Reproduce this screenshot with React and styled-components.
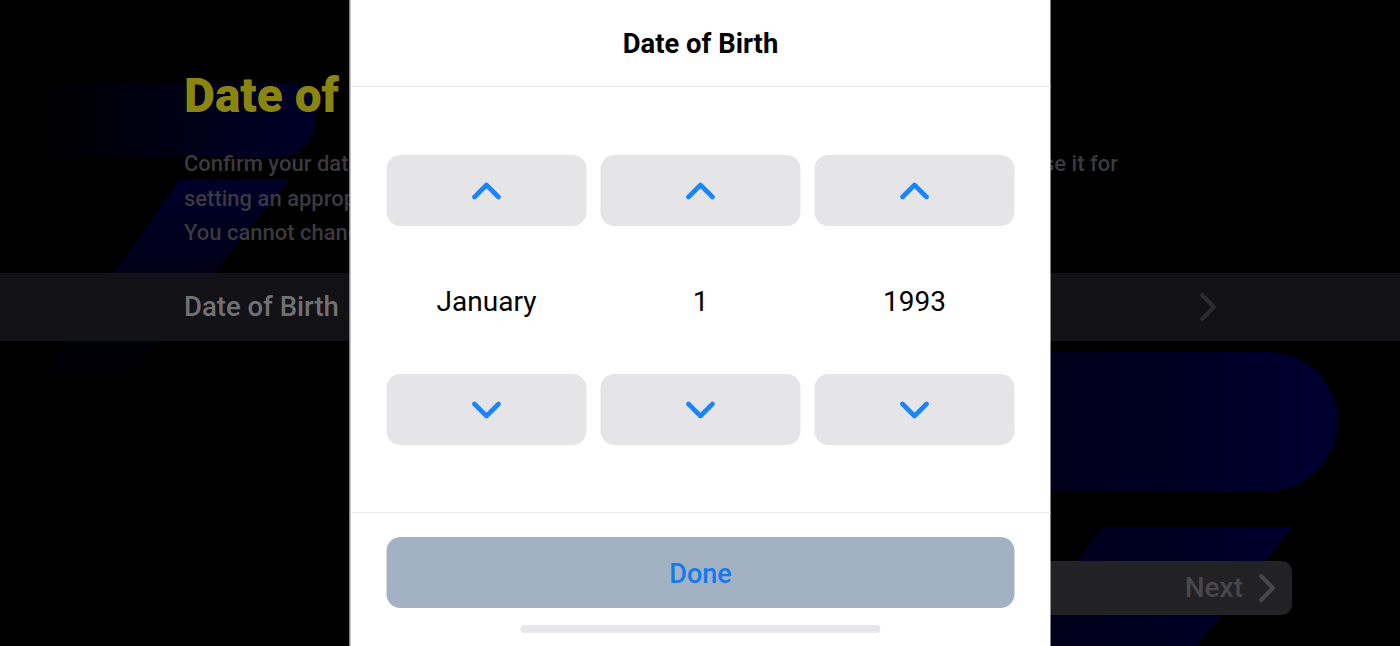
import styled, { createGlobalStyle } from "styled-components";

const Global = createGlobalStyle`
  html, body { margin: 0; padding: 0; background: #000; }
  body { font-family: Roboto, "Liberation Sans", sans-serif; }
  * { box-sizing: border-box; }
`;

const Screen = styled.div`
  position: relative;
  width: 100%;
  height: 100vh;
  overflow: hidden;
  background: #000;
`;

const Decor = styled.svg`
  position: absolute;
  inset: 0;
  width: 100%;
  height: 100%;
`;

const Content = styled.div`
  position: relative;
  display: flex;
  flex-direction: column;
  padding-top: 69px;
`;

const Heading = styled.h1`
  margin: 0 0 24px 184px;
  font-family: Roboto, sans-serif;
  font-size: 47.8px;
  line-height: 54px;
  font-weight: 900;
  color: #8a8410;
  white-space: nowrap;
`;

const Intro = styled.div`
  display: flex;
  flex-direction: column;
  width: 934px;
  margin-left: 184px;
  font-size: 22px;
  font-weight: 500;
  line-height: 34.5px;
  color: #3a3a3f;
`;

const IntroLine = styled.div`
  display: flex;
  justify-content: space-between;
  white-space: nowrap;
`;

const Row = styled.div`
  display: flex;
  align-items: center;
  justify-content: space-between;
  height: 68px;
  margin-top: 22px;
  padding: 0 183px 0 184px;
  background: #121115;
  color: #717075;
  font-size: 27.5px;
  font-weight: 500;
  line-height: 66px;
`;

const Footer = styled.div`
  display: flex;
  justify-content: flex-end;
  margin-top: 220px;
  padding-right: 108px;
`;

const NextButton = styled.div`
  display: flex;
  align-items: center;
  justify-content: flex-end;
  gap: 15px;
  width: 300px;
  height: 54px;
  padding-right: 16px;
  border-radius: 10px;
  background: #222124;
  color: #48474b;
  font-size: 28px;
  font-weight: 500;
`;

const Modal = styled.div`
  position: absolute;
  top: 0;
  bottom: 0;
  left: 50%;
  width: 701px;
  transform: translateX(-50%);
  display: flex;
  flex-direction: column;
  background: #fff;
  border-left: 1px solid #8c8c8c;
`;

const ModalHeader = styled.div`
  display: flex;
  align-items: center;
  justify-content: center;
  height: 87px;
  padding-top: 1px;
  border-bottom: 1px solid #e9e9ec;
  color: #000;
  font-size: 27.4px;
  font-weight: 700;
`;

const Pickers = styled.div`
  display: grid;
  grid-template-columns: repeat(3, 1fr);
  gap: 14px;
  padding: 68px 36px 67px;
  border-bottom: 1px solid #e9e9ec;
`;

const Picker = styled.div`
  display: flex;
  flex-direction: column;
`;

const StepButton = styled.div`
  display: flex;
  align-items: center;
  justify-content: center;
  height: 71px;
  border-radius: 14px;
  background: #e5e5e8;
`;

const Value = styled.div`
  display: flex;
  align-items: center;
  justify-content: center;
  height: 148px;
  padding-top: 3px;
  color: #000;
  font-size: 28px;
  font-weight: 400;
`;

const ModalFooter = styled.div`
  display: flex;
  flex-direction: column;
  align-items: center;
  padding: 24px 36px 0;
`;

const DoneButton = styled.div`
  display: flex;
  align-items: center;
  justify-content: center;
  width: 100%;
  height: 71px;
  padding-top: 2px;
  border-radius: 14px;
  background: #a3b2c2;
  color: #1479ee;
  font-size: 27px;
  font-weight: 500;
`;

const HomeBar = styled.div`
  width: 360px;
  height: 8px;
  margin-top: 17px;
  border-radius: 4px;
  background: #e8e8ea;
`;

function Chevron({ dir, color = "#1a84fb", width = 30, height = 18, stroke = 4.6 }) {
  const points = {
    up: "3,15 15,3 27,15",
    down: "3,3 15,15 27,3",
    right: "3,3 15,15 3,27",
  }[dir];
  const box = dir === "right" ? "0 0 18 30" : "0 0 30 18";
  return (
    <svg width={width} height={height} viewBox={box} fill="none">
      <polyline points={points} stroke={color} strokeWidth={stroke} strokeLinecap="round" strokeLinejoin="round" />
    </svg>
  );
}

const pickers = ["January", "1", "1993"];

export default function App() {
  return (
    <Screen>
      <Global />
      <Decor viewBox="0 0 1400 646" preserveAspectRatio="none">
        <defs>
          <linearGradient id="fadeLeft" gradientUnits="userSpaceOnUse" x1="30" y1="0" x2="320" y2="0">
            <stop offset="0" stopColor="#000" />
            <stop offset="1" stopColor="#00002a" />
          </linearGradient>
          <linearGradient id="fadeDown" gradientUnits="userSpaceOnUse" x1="0" y1="180" x2="0" y2="385">
            <stop offset="0" stopColor="#00002a" />
            <stop offset="1" stopColor="#000" />
          </linearGradient>
          <linearGradient id="fadeRight" gradientUnits="userSpaceOnUse" x1="1000" y1="0" x2="1330" y2="0">
            <stop offset="0" stopColor="#000016" />
            <stop offset="1" stopColor="#000030" />
          </linearGradient>
        </defs>
        <path d="M30 83H285Q316 83 316 112Q316 158 270 158H30Z" fill="url(#fadeLeft)" />
        <polygon points="180,179 290,179 95,420 10,420" fill="url(#fadeDown)" />
        <path d="M1000 352H1268A69.500 69.500 0 0 1 1268 491H1000Z" fill="url(#fadeRight)" />
        <polygon points="1103,527 1293,527 1197,646 1010,646" fill="url(#fadeRight)" />
      </Decor>

      <Content>
        <Heading>Date of Birth</Heading>
        <Intro>
          <IntroLine>
            <span>Confirm your date of birth.</span>
            <span>We will use it for</span>
          </IntroLine>
          <IntroLine>
            <span>setting an appropriate experience.</span>
          </IntroLine>
          <IntroLine>
            <span>You cannot change this later.</span>
          </IntroLine>
        </Intro>
        <Row>
          <span>Date of Birth</span>
          <Chevron dir="right" color="#2c2b2f" width={18} height={30} stroke={4} />
        </Row>
        <Footer>
          <NextButton>
            <span>Next</span>
            <Chevron dir="right" color="#48474b" width={18} height={30} stroke={4} />
          </NextButton>
        </Footer>
      </Content>

      <Modal>
        <ModalHeader>Date of Birth</ModalHeader>
        <Pickers>
          {pickers.map((value) => (
            <Picker key={value}>
              <StepButton>
                <Chevron dir="up" />
              </StepButton>
              <Value>{value}</Value>
              <StepButton>
                <Chevron dir="down" />
              </StepButton>
            </Picker>
          ))}
        </Pickers>
        <ModalFooter>
          <DoneButton>Done</DoneButton>
          <HomeBar />
        </ModalFooter>
      </Modal>
    </Screen>
  );
}
